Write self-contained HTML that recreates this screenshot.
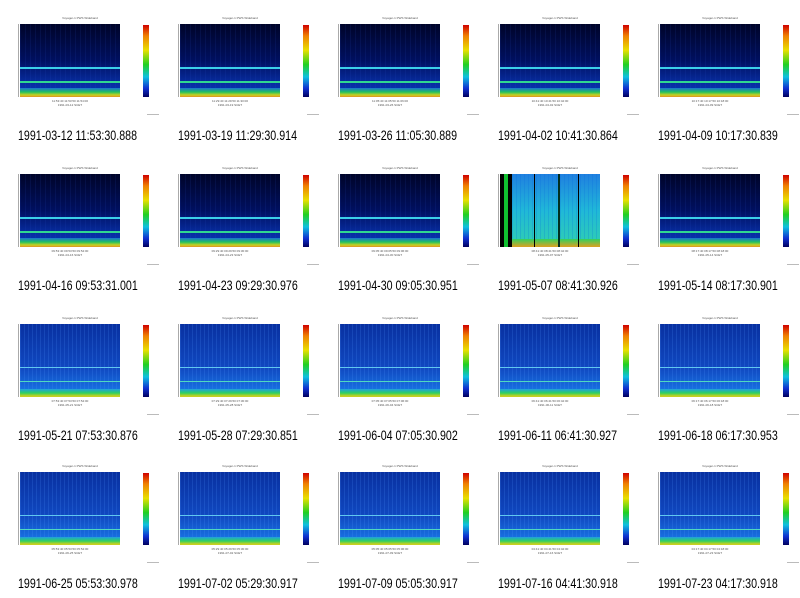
<!DOCTYPE html>
<html><head><meta charset="utf-8"><style>
body{margin:0;width:800px;height:596px;background:#fff;position:relative;overflow:hidden;font-family:"Liberation Sans",sans-serif}
.c{position:absolute;width:160px;height:150px}
.t{position:absolute;left:40px;top:16px;font-size:3px;color:#555;width:80px;text-align:center}
.p{position:absolute;left:20px;top:24px;width:100px;height:73px;
background:
linear-gradient(to bottom,transparent 43px,#3cd0e8 43px,#3cd0e8 45px,transparent 45px),
linear-gradient(to bottom,transparent 57px,#30d890 57px,#30d890 59px,transparent 59px),
linear-gradient(to bottom,transparent 64px,#1a70d0 64px,#20c060 68px,#c8d020 71px,#e09020 73px),
repeating-linear-gradient(to right,rgba(40,80,200,.12) 0 1px,transparent 1px 5px),
linear-gradient(to bottom,#000428 0%,#001060 50%,#0830a8 85%);}
.b .p{background:
linear-gradient(to bottom,transparent 43px,#60c8f0 43px,#60c8f0 44px,transparent 44px),
linear-gradient(to bottom,transparent 57px,#50d8c0 57px,#50d8c0 58px,transparent 58px),
linear-gradient(to bottom,transparent 65px,#20a0e0 65px,#30d060 69px,#c8d020 72px),
repeating-linear-gradient(to right,rgba(80,150,255,.18) 0 1px,transparent 1px 4px),
linear-gradient(to bottom,#0830a0 0%,#1048c0 60%,#1870e0 90%);}
.g .p{background:
linear-gradient(to right,#000 0,#000 4px,#10c030 4px,#10c030 8px,#000 8px,#000 12px,transparent 12px),
linear-gradient(to right,transparent 0,transparent 34px,#000 34px,#000 35px,transparent 35px,transparent 58px,#003020 58px,#003020 60px,transparent 60px,transparent 78px,#000 78px,#000 79px,transparent 79px),
linear-gradient(to bottom,transparent 65px,#30d060 65px,#e0a020 73px),
repeating-linear-gradient(to right,rgba(0,100,220,.2) 0 1px,transparent 1px 4px),
linear-gradient(to bottom,#2080e0,#20b8d8 50%,#30d0b0);}
.x{position:absolute;left:20px;top:99px;width:100px;font-size:3px;color:#555;text-align:center;line-height:4px}
.y{position:absolute;left:14px;top:24px;width:4px;height:73px;border-right:1px solid #aaa}
.cb{position:absolute;left:143px;top:25px;width:6px;height:72px;background:linear-gradient(to bottom,#d00000,#f08000 15%,#e8e000 35%,#20d020 55%,#10c0e0 72%,#1030d0 88%,#000060)}
.s{position:absolute;left:147px;top:114px;width:12px;height:1px;background:#bbb}
.cap{position:absolute;left:18px;top:128px;font-size:13.5px;color:#000;white-space:nowrap;transform:scaleX(0.79);transform-origin:0 0}
</style></head><body>

<div class="c" style="left:0;top:0"><div class="t">Voyager-1 PWS Wideband</div><div class="y"></div><div class="p"></div><div class="x">11:53:40 11:53:50 11:54:00<br>1991-03-12 SCET</div><div class="cb"></div><div class="s"></div><div class="cap">1991-03-12 11:53:30.888</div></div>
<div class="c" style="left:160px;top:0"><div class="t">Voyager-1 PWS Wideband</div><div class="y"></div><div class="p"></div><div class="x">11:29:40 11:29:50 11:30:00<br>1991-03-19 SCET</div><div class="cb"></div><div class="s"></div><div class="cap">1991-03-19 11:29:30.914</div></div>
<div class="c" style="left:320px;top:0"><div class="t">Voyager-1 PWS Wideband</div><div class="y"></div><div class="p"></div><div class="x">11:05:40 11:05:50 11:06:00<br>1991-03-26 SCET</div><div class="cb"></div><div class="s"></div><div class="cap">1991-03-26 11:05:30.889</div></div>
<div class="c" style="left:480px;top:0"><div class="t">Voyager-1 PWS Wideband</div><div class="y"></div><div class="p"></div><div class="x">10:41:40 10:41:50 10:42:00<br>1991-04-02 SCET</div><div class="cb"></div><div class="s"></div><div class="cap">1991-04-02 10:41:30.864</div></div>
<div class="c" style="left:640px;top:0"><div class="t">Voyager-1 PWS Wideband</div><div class="y"></div><div class="p"></div><div class="x">10:17:40 10:17:50 10:18:00<br>1991-04-09 SCET</div><div class="cb"></div><div class="s"></div><div class="cap">1991-04-09 10:17:30.839</div></div>

<div class="c" style="left:0;top:150px"><div class="t">Voyager-1 PWS Wideband</div><div class="y"></div><div class="p"></div><div class="x">09:53:40 09:53:50 09:54:00<br>1991-04-16 SCET</div><div class="cb"></div><div class="s"></div><div class="cap">1991-04-16 09:53:31.001</div></div>
<div class="c" style="left:160px;top:150px"><div class="t">Voyager-1 PWS Wideband</div><div class="y"></div><div class="p"></div><div class="x">09:29:40 09:29:50 09:30:00<br>1991-04-23 SCET</div><div class="cb"></div><div class="s"></div><div class="cap">1991-04-23 09:29:30.976</div></div>
<div class="c" style="left:320px;top:150px"><div class="t">Voyager-1 PWS Wideband</div><div class="y"></div><div class="p"></div><div class="x">09:05:40 09:05:50 09:06:00<br>1991-04-30 SCET</div><div class="cb"></div><div class="s"></div><div class="cap">1991-04-30 09:05:30.951</div></div>
<div class="c g" style="left:480px;top:150px"><div class="t">Voyager-1 PWS Wideband</div><div class="y"></div><div class="p"></div><div class="x">08:41:40 08:41:50 08:42:00<br>1991-05-07 SCET</div><div class="cb"></div><div class="s"></div><div class="cap">1991-05-07 08:41:30.926</div></div>
<div class="c" style="left:640px;top:150px"><div class="t">Voyager-1 PWS Wideband</div><div class="y"></div><div class="p"></div><div class="x">08:17:40 08:17:50 08:18:00<br>1991-05-14 SCET</div><div class="cb"></div><div class="s"></div><div class="cap">1991-05-14 08:17:30.901</div></div>

<div class="c b" style="left:0;top:300px"><div class="t">Voyager-1 PWS Wideband</div><div class="y"></div><div class="p"></div><div class="x">07:53:40 07:53:50 07:54:00<br>1991-05-21 SCET</div><div class="cb"></div><div class="s"></div><div class="cap">1991-05-21 07:53:30.876</div></div>
<div class="c b" style="left:160px;top:300px"><div class="t">Voyager-1 PWS Wideband</div><div class="y"></div><div class="p"></div><div class="x">07:29:40 07:29:50 07:30:00<br>1991-05-28 SCET</div><div class="cb"></div><div class="s"></div><div class="cap">1991-05-28 07:29:30.851</div></div>
<div class="c b" style="left:320px;top:300px"><div class="t">Voyager-1 PWS Wideband</div><div class="y"></div><div class="p"></div><div class="x">07:05:40 07:05:50 07:06:00<br>1991-06-04 SCET</div><div class="cb"></div><div class="s"></div><div class="cap">1991-06-04 07:05:30.902</div></div>
<div class="c b" style="left:480px;top:300px"><div class="t">Voyager-1 PWS Wideband</div><div class="y"></div><div class="p"></div><div class="x">06:41:40 06:41:50 06:42:00<br>1991-06-11 SCET</div><div class="cb"></div><div class="s"></div><div class="cap">1991-06-11 06:41:30.927</div></div>
<div class="c b" style="left:640px;top:300px"><div class="t">Voyager-1 PWS Wideband</div><div class="y"></div><div class="p"></div><div class="x">06:17:40 06:17:50 06:18:00<br>1991-06-18 SCET</div><div class="cb"></div><div class="s"></div><div class="cap">1991-06-18 06:17:30.953</div></div>

<div class="c b" style="left:0;top:448px"><div class="t">Voyager-1 PWS Wideband</div><div class="y"></div><div class="p"></div><div class="x">05:53:40 05:53:50 05:54:00<br>1991-06-25 SCET</div><div class="cb"></div><div class="s"></div><div class="cap">1991-06-25 05:53:30.978</div></div>
<div class="c b" style="left:160px;top:448px"><div class="t">Voyager-1 PWS Wideband</div><div class="y"></div><div class="p"></div><div class="x">05:29:40 05:29:50 05:30:00<br>1991-07-02 SCET</div><div class="cb"></div><div class="s"></div><div class="cap">1991-07-02 05:29:30.917</div></div>
<div class="c b" style="left:320px;top:448px"><div class="t">Voyager-1 PWS Wideband</div><div class="y"></div><div class="p"></div><div class="x">05:05:40 05:05:50 05:06:00<br>1991-07-09 SCET</div><div class="cb"></div><div class="s"></div><div class="cap">1991-07-09 05:05:30.917</div></div>
<div class="c b" style="left:480px;top:448px"><div class="t">Voyager-1 PWS Wideband</div><div class="y"></div><div class="p"></div><div class="x">04:41:40 04:41:50 04:42:00<br>1991-07-16 SCET</div><div class="cb"></div><div class="s"></div><div class="cap">1991-07-16 04:41:30.918</div></div>
<div class="c b" style="left:640px;top:448px"><div class="t">Voyager-1 PWS Wideband</div><div class="y"></div><div class="p"></div><div class="x">04:17:40 04:17:50 04:18:00<br>1991-07-23 SCET</div><div class="cb"></div><div class="s"></div><div class="cap">1991-07-23 04:17:30.918</div></div>

</body></html>
